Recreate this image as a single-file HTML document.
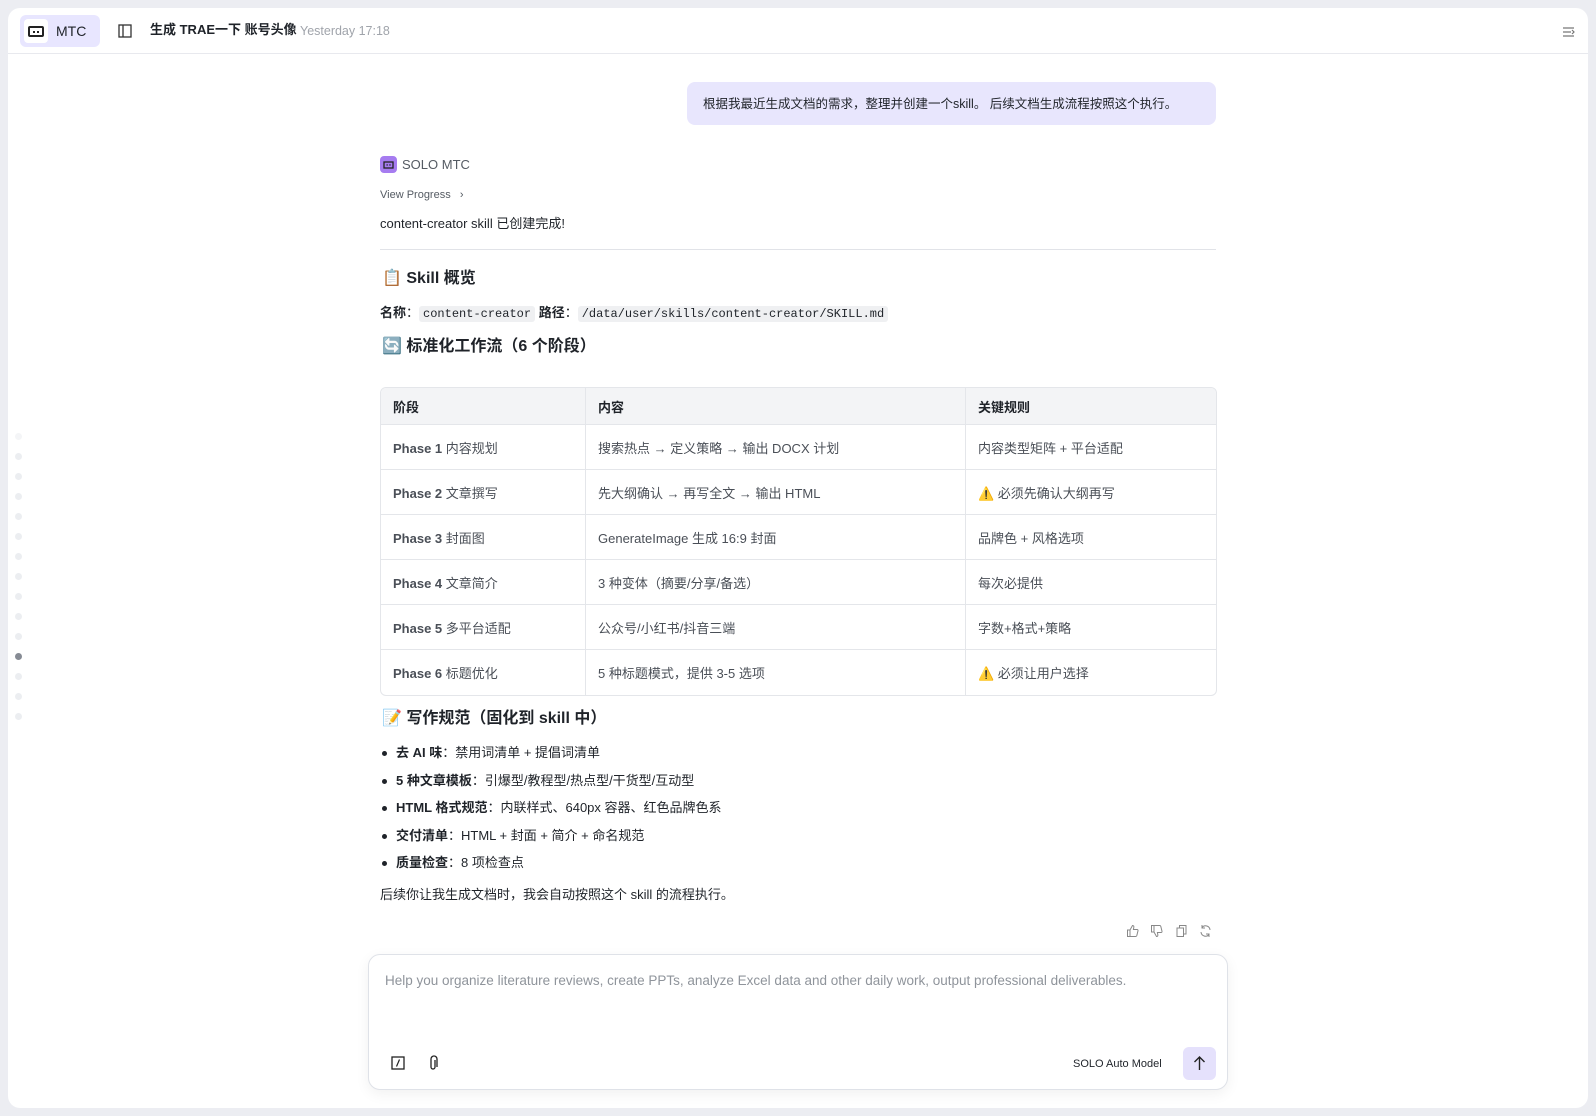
<!DOCTYPE html>
<html><head><meta charset="utf-8"><style>
*{box-sizing:border-box;margin:0;padding:0}
body{width:1596px;height:1116px;background:#ecedf2;font-family:"Liberation Sans","Noto Sans CJK SC",sans-serif;color:#1f2329;position:relative;overflow:hidden}
.card{position:absolute;left:8px;top:8px;width:1580px;height:1100px;background:#fff;border-radius:12px}
.abs{position:absolute}
.hdr{position:absolute;left:0;top:0;width:1580px;height:46px;border-bottom:1px solid #e8e9ee}
.mtc{position:absolute;left:12px;top:7px;width:80px;height:32px;background:#e8e6ff;border-radius:6px}
.mtc .ic{position:absolute;left:4px;top:4px;width:24px;height:24px;background:#fff;border-radius:4px}
.t{font-size:13px;line-height:18px;white-space:nowrap}
code{font-family:"Liberation Mono",monospace;font-size:12px;background:#eff0f2;border-radius:3px;padding:1px 4px}
table{border-collapse:separate;border-spacing:0;border:1px solid #e4e6ea;border-radius:6px;overflow:hidden;font-size:13px}
td,th{border-right:1px solid #e4e6ea;border-bottom:1px solid #e4e6ea;text-align:left;padding:0 12px;height:45px;color:#4a4f57;font-weight:normal}
th{background:#f3f4f6;height:37px;color:#1f2329;font-weight:bold}
td:last-child,th:last-child{border-right:none}
tr:last-child td{border-bottom:none}
td b{color:#4a4f57}
.dot{position:absolute;left:15px;width:7px;height:7px;border-radius:50%;background:#eceef1}
li{list-style:none;position:relative;padding-left:16px;height:27.5px;font-size:13px;line-height:18px}
li:before{content:"";position:absolute;left:2px;top:7px;width:5px;height:5px;border-radius:50%;background:#1f2329}
</style></head><body>
<div class="card">
 <div class="hdr">
  <div class="mtc"><div class="ic"><svg width="24" height="24" viewBox="0 0 24 24"><rect x="5" y="8" width="14" height="9" rx="1" fill="none" stroke="#222" stroke-width="2"/><rect x="9" y="12" width="2" height="2" fill="#222"/><rect x="13" y="12" width="2" height="2" fill="#222"/></svg></div><span class="abs t" style="left:36px;top:7px;font-size:14px">MTC</span></div>
  <svg class="abs" style="left:110px;top:16px" width="14" height="14" viewBox="0 0 14 14"><rect x="1" y="1" width="12" height="12" fill="none" stroke="#333" stroke-width="1.3"/><line x1="5" y1="1" x2="5" y2="13" stroke="#333" stroke-width="1.3"/></svg>
  <span class="abs t" style="left:142px;top:13px;font-size:13px;font-weight:bold;color:#1f2329">生成 TRAE一下 账号头像</span>
  <span class="abs t" style="left:292px;top:14px;font-size:12.5px;color:#a0a4ab">Yesterday 17:18</span>
  <svg class="abs" style="left:1554px;top:18px" width="14" height="12" viewBox="0 0 14 12"><path d="M1 2h11M1 6h8M1 10h11M10 4l2 2-2 2" fill="none" stroke="#777" stroke-width="1.2"/></svg>
 </div>
</div>
<div class="abs" style="left:687px;top:82px;width:529px;height:43px;background:#e8e6fd;border-radius:8px"></div>
<span class="abs t" style="left:703px;top:95px;font-size:12.5px">根据我最近生成文档的需求，整理并创建一个skill。 后续文档生成流程按照这个执行。</span>

<div class="abs" style="left:380px;top:156px;width:17px;height:17px;background:#a67cf0;border-radius:4px"><svg width="17" height="17" viewBox="0 0 17 17"><rect x="4" y="6" width="9" height="6" fill="none" stroke="#222" stroke-width="1.3"/><rect x="6.5" y="8.3" width="1.3" height="1.3" fill="#222"/><rect x="9.3" y="8.3" width="1.3" height="1.3" fill="#222"/></svg></div>
<span class="abs t" style="left:402px;top:156px;color:#555b63">SOLO MTC</span>
<span class="abs t" style="left:380px;top:186px;font-size:11px;color:#555b63">View Progress &nbsp;&nbsp;›</span>
<span class="abs t" style="left:380px;top:215px">content-creator skill 已创建完成!</span>
<div class="abs" style="left:380px;top:249px;width:836px;height:1px;background:#e1e3e8"></div>
<span class="abs t" style="left:382px;top:269px;font-size:16px;font-weight:bold;line-height:20px">📋 Skill 概览</span>
<span class="abs t" style="left:380px;top:304px"><b>名称</b>：<code>content-creator</code> <b>路径</b>：<code>/data/user/skills/content-creator/SKILL.md</code></span>
<span class="abs t" style="left:382px;top:337px;font-size:16px;font-weight:bold;line-height:20px">🔄 标准化工作流（6 个阶段）</span>
<table class="abs" style="left:380px;top:387px;width:837px">
<tr><th style="width:205px">阶段</th><th style="width:380px">内容</th><th>关键规则</th></tr>
<tr><td><b>Phase 1</b> 内容规划</td><td>搜索热点 → 定义策略 → 输出 DOCX 计划</td><td>内容类型矩阵 + 平台适配</td></tr>
<tr><td><b>Phase 2</b> 文章撰写</td><td>先大纲确认 → 再写全文 → 输出 HTML</td><td>⚠️ 必须先确认大纲再写</td></tr>
<tr><td><b>Phase 3</b> 封面图</td><td>GenerateImage 生成 16:9 封面</td><td>品牌色 + 风格选项</td></tr>
<tr><td><b>Phase 4</b> 文章简介</td><td>3 种变体（摘要/分享/备选）</td><td>每次必提供</td></tr>
<tr><td><b>Phase 5</b> 多平台适配</td><td>公众号/小红书/抖音三端</td><td>字数+格式+策略</td></tr>
<tr><td><b>Phase 6</b> 标题优化</td><td>5 种标题模式，提供 3-5 选项</td><td>⚠️ 必须让用户选择</td></tr>
</table>
<span class="abs t" style="left:382px;top:709px;font-size:16px;font-weight:bold;line-height:20px">📝 写作规范（固化到 skill 中）</span>
<ul class="abs" style="left:380px;top:744px">
<li><b>去 AI 味</b>：禁用词清单 + 提倡词清单</li>
<li><b>5 种文章模板</b>：引爆型/教程型/热点型/干货型/互动型</li>
<li><b>HTML 格式规范</b>：内联样式、640px 容器、红色品牌色系</li>
<li><b>交付清单</b>：HTML + 封面 + 简介 + 命名规范</li>
<li><b>质量检查</b>：8 项检查点</li>
</ul>
<span class="abs t" style="left:380px;top:886px">后续你让我生成文档时，我会自动按照这个 skill 的流程执行。</span>
<svg class="abs" style="left:1126px;top:924px" width="90" height="14" viewBox="0 0 90 14" fill="none" stroke="#888" stroke-width="1">
<path d="M1.5 6h2.5v6.5H1.5zM4 6l2.5-4.5c1.2 0 1.5.8 1.3 2L7.4 5.5h3.6c.8 0 1.2.6 1 1.3l-1.2 4.8c-.2.6-.6.9-1.2.9H4"/>
<path transform="translate(24,0)" d="M1.5 8h2.5V1.5H1.5zM4 8l2.5 4.5c1.2 0 1.5-.8 1.3-2L7.4 8.5h3.6c.8 0 1.2-.6 1-1.3L10.8 2.4c-.2-.6-.6-.9-1.2-.9H4"/>
<path transform="translate(49,0)" d="M2 4h6.5v8.5H2zM4.5 4V1.5h6.5V10H8.5"/>
<path transform="translate(73,0)" d="M11 6A4.5 4.5 0 0 0 3 3.5M2 8a4.5 4.5 0 0 0 8 2.5M3 1v3h3M10 13v-3H7"/>
</svg>

<div class="abs" style="left:368px;top:954px;width:860px;height:136px;border:1px solid #dfe2e8;border-radius:12px;background:#fff;box-shadow:0 4px 14px rgba(0,0,0,.06)"></div>
<span class="abs t" style="left:385px;top:972px;font-size:13.5px;color:#8f949b">Help you organize literature reviews, create PPTs, analyze Excel data and other daily work, output professional deliverables.</span>
<svg class="abs" style="left:391px;top:1056px" width="14" height="14" viewBox="0 0 14 14"><rect x="1" y="1" width="12" height="12" fill="none" stroke="#222" stroke-width="1.3"/><line x1="8.5" y1="3.5" x2="5.5" y2="10.5" stroke="#222" stroke-width="1.2"/></svg>
<svg class="abs" style="left:428px;top:1055px" width="12" height="16" viewBox="0 0 12 16"><path d="M8 4v7a2 2 0 0 1-4 0V3a3 3 0 0 1 6 0v8" fill="none" stroke="#222" stroke-width="1.3" transform="translate(-1,1)"/></svg>
<span class="abs t" style="left:1073px;top:1055px;font-size:11px">SOLO Auto Model</span>
<div class="abs" style="left:1183px;top:1047px;width:33px;height:33px;background:#e5e1fc;border-radius:6px"><svg width="33" height="33" viewBox="0 0 33 33"><path d="M16.5 23V10M11.5 15l5-5 5 5" fill="none" stroke="#222" stroke-width="1.4"/></svg></div>

<div class="dot" style="top:433px;background:#f4f5f7"></div><div class="dot" style="top:453px"></div><div class="dot" style="top:473px"></div><div class="dot" style="top:493px"></div><div class="dot" style="top:513px"></div><div class="dot" style="top:533px"></div><div class="dot" style="top:553px"></div><div class="dot" style="top:573px"></div><div class="dot" style="top:593px"></div><div class="dot" style="top:613px"></div><div class="dot" style="top:633px"></div><div class="dot" style="top:653px;background:#868b94"></div><div class="dot" style="top:673px"></div><div class="dot" style="top:693px"></div><div class="dot" style="top:713px"></div>
</body></html>
